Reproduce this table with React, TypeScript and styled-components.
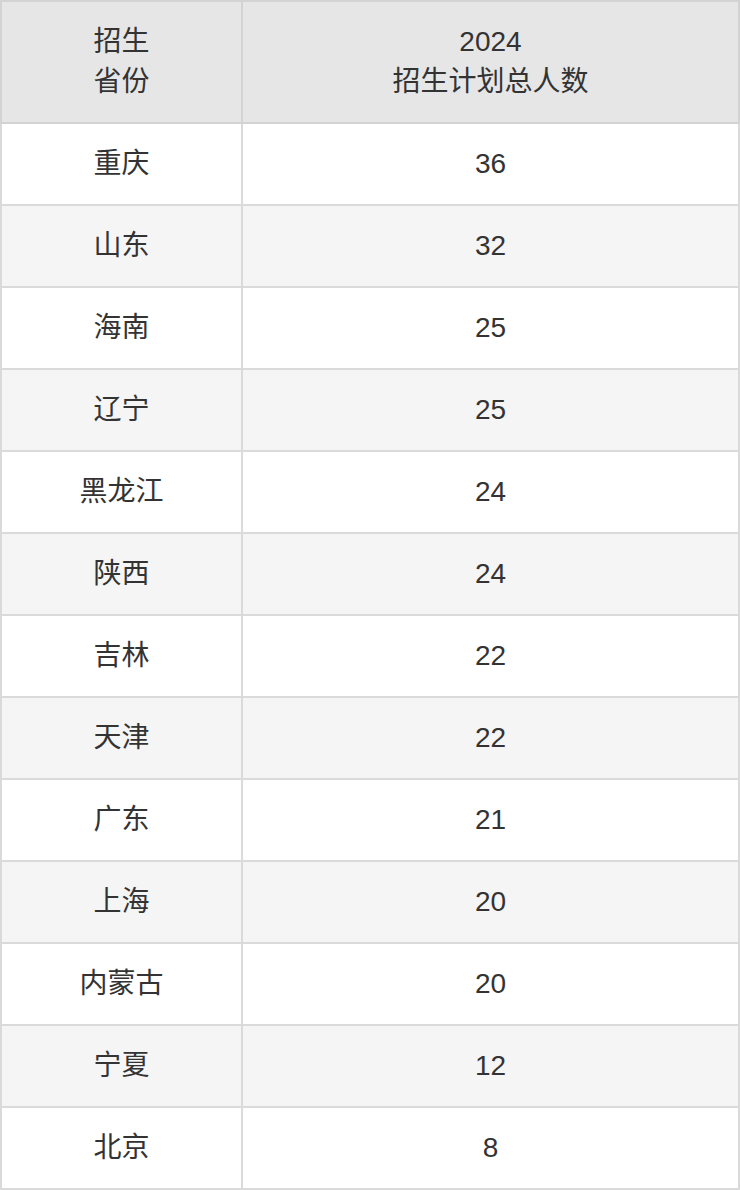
import React from "react";
import styled, { createGlobalStyle } from "styled-components";

const GlobalStyle = createGlobalStyle`
  html, body {
    margin: 0;
    padding: 0;
    background: #ffffff;
  }
  body {
    font-family: "Liberation Sans", "Noto Sans CJK SC", sans-serif;
    color: #333333;
  }
`;

const rows = [
  { province: "重庆", count: 36 },
  { province: "山东", count: 32 },
  { province: "海南", count: 25 },
  { province: "辽宁", count: 25 },
  { province: "黑龙江", count: 24 },
  { province: "陕西", count: 24 },
  { province: "吉林", count: 22 },
  { province: "天津", count: 22 },
  { province: "广东", count: 21 },
  { province: "上海", count: 20 },
  { province: "内蒙古", count: 20 },
  { province: "宁夏", count: 12 },
  { province: "北京", count: 8 },
];

const Table = styled.table`
  width: 740px;
  border-collapse: collapse;
  table-layout: fixed;
  border: 2px solid #d3d3d3;
  font-size: 28px;
  line-height: 40px;
`;

const HeadCell = styled.th`
  background: #e6e6e6;
  font-weight: normal;
  padding: 20px 10px;
  border: 2px solid #d3d3d3;
  text-align: center;
  color: #333333;
`;

const Row = styled.tr<{ $striped: boolean }>`
  background: ${(p) => (p.$striped ? "#f5f5f5" : "#ffffff")};
`;

const Cell = styled.td`
  padding: 20px 10px;
  border: 2px solid #dadada;
  text-align: center;
  color: #333333;
`;

export default function App() {
  return (
    <>
      <GlobalStyle />
      <Table>
        <colgroup>
          <col style={{ width: 241 }} />
          <col />
        </colgroup>
        <thead>
          <tr>
            <HeadCell>
              招生
              <br />
              省份
            </HeadCell>
            <HeadCell>
              2024
              <br />
              招生计划总人数
            </HeadCell>
          </tr>
        </thead>
        <tbody>
          {rows.map((r, i) => (
            <Row key={r.province} $striped={i % 2 === 1}>
              <Cell>{r.province}</Cell>
              <Cell>{r.count}</Cell>
            </Row>
          ))}
        </tbody>
      </Table>
    </>
  );
}
